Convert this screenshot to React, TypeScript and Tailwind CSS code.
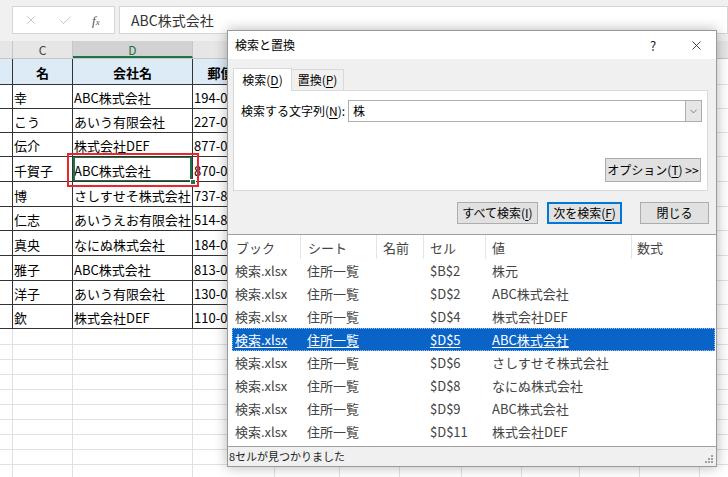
import React from 'react'
import { X, Check, ChevronDown } from 'lucide-react'

const colW = ['w-[13px]', 'w-[60px]', 'w-[120px]', 'w-[82px]', 'w-[65px]', 'w-[60px]', 'w-[62px]', 'w-[60px]', 'w-[58px]', 'w-[60px]', 'w-[60px]', 'w-[60px]']
const letters = ['B', 'C', 'D', 'E', 'F', 'G', 'H', 'I', 'J', 'K', 'L', 'M']
const rowH = ['h-[24px]', 'h-[24px]', 'h-[24px]', 'h-[25px]', 'h-[25px]', 'h-[24px]', 'h-[25px]', 'h-[25px]', 'h-[24px]', 'h-[24px]']

const people = [
  ['幸', 'ABC株式会社', '194-0013'],
  ['こう', 'あいう有限会社', '227-0033'],
  ['伝介', '株式会社DEF', '877-0000'],
  ['千賀子', 'ABC株式会社', '870-0000'],
  ['博', 'さしすせそ株式会社', '737-8000'],
  ['仁志', 'あいうえお有限会社', '514-8000'],
  ['真央', 'なにぬ株式会社', '184-0000'],
  ['雅子', 'ABC株式会社', '813-0000'],
  ['洋子', 'あいう有限会社', '130-0000'],
  ['欽', '株式会社DEF', '110-0000'],
]

const results = [
  ['$B$2', '株元'],
  ['$D$2', 'ABC株式会社'],
  ['$D$4', '株式会社DEF'],
  ['$D$5', 'ABC株式会社'],
  ['$D$6', 'さしすせそ株式会社'],
  ['$D$8', 'なにぬ株式会社'],
  ['$D$9', 'ABC株式会社'],
  ['$D$11', '株式会社DEF'],
]

function U({ children }: { children: React.ReactNode }) {
  return <span className="underline underline-offset-2">{children}</span>
}

function Sheet() {
  return (
    <div className="flex flex-col">
      {/* formula bar */}
      <div className="h-[41px] bg-[#f0f0f0] flex items-start pt-[6px]">
        <div className="ml-[12px] w-[103px] h-[28px] bg-white border border-[#d6d6d6] flex items-center text-[#b8b8b8]">
          <X size={14} strokeWidth={1.3} className="ml-[11px]" />
          <Check size={15} strokeWidth={1.3} className="ml-[20px]" />
          <span className="ml-[19px] italic text-[13px] leading-none text-[#555] font-['Liberation_Serif',serif]">
            f<span className="text-[9px]">x</span>
          </span>
        </div>
        <div className="ml-[4px] flex-1 h-[28px] bg-white border border-[#d6d6d6] flex items-center pl-[11px] text-[14px] leading-none text-[#333]">
          ABC株式会社
        </div>
      </div>

      {/* column letters */}
      <div className="flex h-[18px] bg-[#e6e6e6] border-b border-[#c6c6c6]">
        {letters.map((l, i) => (
          <div
            key={l}
            className={`${colW[i]} shrink-0 border-r border-[#c6c6c6] text-center text-[12px] leading-[17px] ${
              l === 'D' ? 'bg-[#d2d2d2] text-[#217346] border-b-2 border-b-[#217346]' : 'text-[#444]'
            }`}
          >
            {i === 0 || i === letters.length - 1 ? '' : l}
          </div>
        ))}
      </div>

      {/* header row */}
      <div className="flex h-[26px]">
        {letters.map((l, i) => (
          <div
            key={l}
            className={`${colW[i]} shrink-0 border-b flex items-end justify-center pb-[3px] text-[13px] leading-[16px] font-bold text-black whitespace-nowrap overflow-hidden ${
              i < 4 ? 'bg-[#ddebf7] border-r border-[#333]' : 'border-r border-[#e1e1e1]'
            }`}
          >
            {i === 1 ? '名' : i === 2 ? '会社名' : i === 3 ? '郵便番号' : ''}
          </div>
        ))}
      </div>

      {/* data rows */}
      {people.map((p, r) => (
        <div key={r} className={`flex ${rowH[r]}`}>
          {letters.map((l, i) => (
            <div
              key={l}
              className={`${colW[i]} shrink-0 relative border-b flex items-end pb-[2px] px-[1px] text-[13px] leading-[16px] text-black whitespace-nowrap overflow-hidden ${
                i < 4 ? 'border-r border-[#333]' : 'border-r border-[#e1e1e1]'
              }`}
            >
              {i === 1 ? p[0] : i === 2 ? p[1] : i === 3 ? p[2] : ''}
              {r === 3 && i === 2 && (
                <div className="absolute inset-x-0 top-[-1px] bottom-[-1px] border-2 border-[#217346]" />
              )}
            </div>
          ))}
        </div>
      ))}

      {/* empty rows */}
      {[16, 15, 15, 15, 15, 15, 15, 15, 15, 15].map((h, r) => (
        <div key={r} className={`flex ${h === 16 ? 'h-[16px]' : 'h-[15px]'}`}>
          {letters.map((l, i) => (
            <div key={l} className={`${colW[i]} shrink-0 border-r border-b border-[#e1e1e1]`} />
          ))}
        </div>
      ))}
    </div>
  )
}

function Btn({ className, children }: { className: string; children: React.ReactNode }) {
  return (
    <div className={`h-[22px] flex items-center justify-center bg-[#e1e1e1] text-[12px] leading-none text-black ${className}`}>
      {children}
    </div>
  )
}

function Dialog() {
  return (
    <div className="absolute left-[227px] top-[30px] w-[490px] h-[437px] border border-[#9a9a9a] bg-[#f0f0f0] shadow-[0_0_12px_rgba(0,0,0,0.3)] flex flex-col">
      {/* title bar */}
      <div className="h-[28px] shrink-0 bg-white flex items-center">
        <span className="pl-[7px] text-[12px] leading-none text-black">検索と置換</span>
        <span className="ml-auto w-[30px] text-center text-[13px] leading-none text-[#222]">?</span>
        <span className="ml-[8px] w-[40px] flex justify-center text-[#222]">
          <X size={15} strokeWidth={1.3} />
        </span>
      </div>

      {/* tabs */}
      <div className="flex items-end pt-[9px] pl-[5px] h-[31px] shrink-0">
        <div className="relative z-10 -mb-px w-[59px] h-[23px] bg-white border border-b-0 border-[#d9d9d9] flex items-center justify-center text-[12px] leading-none">
          検索(<U>D</U>)
        </div>
        <div className="w-[52px] h-[21px] bg-[#f0f0f0] border border-l-0 border-b-0 border-[#d9d9d9] flex items-center justify-center text-[12px] leading-none">
          置換(<U>P</U>)
        </div>
      </div>

      {/* tab panel */}
      <div className="ml-[5px] w-[475px] h-[101px] shrink-0 bg-white border border-[#d9d9d9] flex flex-col">
        <div className="flex items-center pt-[9px]">
          <span className="w-[114px] pl-[7px] text-[12px] leading-none">
            検索する文字列(<U>N</U>):
          </span>
          <div className="w-[354px] h-[22px] border border-[#adadad] flex items-center">
            <span className="pl-[4px] text-[12px] leading-none flex-1">株</span>
            <div className="w-[16px] h-[20px] bg-[#e6e6e6] border-l border-[#adadad] flex items-center justify-center text-[#555]">
              <ChevronDown size={11} strokeWidth={1.5} />
            </div>
          </div>
        </div>
        <div className="flex justify-end mt-[36px] pr-[6px]">
          <Btn className="w-[96px] h-[24px] border border-[#adadad]">
            オプション(<U>T</U>)&nbsp;&gt;&gt;
          </Btn>
        </div>
      </div>

      {/* buttons */}
      <div className="flex mt-[11px] pl-[229px] shrink-0">
        <Btn className="w-[81px] border border-[#adadad]">
          すべて検索(<U>I</U>)
        </Btn>
        <Btn className="ml-[9px] w-[75px] border-2 border-[#0078d7]">
          次を検索(<U>F</U>)
        </Btn>
        <Btn className="ml-[18px] w-[69px] border border-[#adadad]">閉じる</Btn>
      </div>

      {/* results */}
      <div className="mt-[10px] h-[212px] shrink-0 bg-white border-t border-[#a0a0a0] flex flex-col">
        <div className="flex h-[24px] text-[13px] leading-none text-[#444] items-center">
          <div className="w-[73px] h-full pl-[8px] flex items-center border-r border-[#e5e5e5]">ブック</div>
          <div className="w-[76px] h-full pl-[7px] flex items-center border-r border-[#e5e5e5]">シート</div>
          <div className="w-[47px] h-full pl-[6px] flex items-center border-r border-[#e5e5e5]">名前</div>
          <div className="w-[62px] h-full pl-[6px] flex items-center border-r border-[#e5e5e5]">セル</div>
          <div className="w-[146px] h-full pl-[6px] flex items-center border-r border-[#e5e5e5]">値</div>
          <div className="flex-1 h-full pl-[5px] flex items-center">数式</div>
        </div>
        {results.map(([cell, val], i) => {
          const sel = i === 3
          return (
            <div
              key={cell}
              className={`ml-[4px] mr-[1px] h-[23px] flex items-center text-[13px] leading-[16px] ${
                sel
                  ? 'bg-[#0a64c8] text-white underline underline-offset-2 outline-1 outline-dotted outline-[#9cc0ea] -outline-offset-1'
                  : 'text-[#444]'
              }`}
            >
              <div className="w-[69px] pl-[3px]">検索.xlsx</div>
              <div className="w-[76px] pl-[6px]">住所一覧</div>
              <div className="w-[47px]" />
              <div className="w-[62px] pl-[6px]">{cell}</div>
              <div className="w-[146px] pl-[6px] whitespace-nowrap">{val}</div>
              <div className="flex-1" />
            </div>
          )
        })}
      </div>

      {/* status bar */}
      <div className="flex-1 border-t border-[#a0a0a0] bg-[#f0f0f0] flex items-center pl-[1px] text-[11px] leading-none text-[#222] relative">
        8セルが見つかりました
        <svg className="absolute right-[2px] bottom-[2px]" width="10" height="10" viewBox="0 0 10 10">
          {[
            [8, 2],
            [8, 5],
            [5, 5],
            [8, 8],
            [5, 8],
            [2, 8],
          ].map(([x, y]) => (
            <rect key={`${x}-${y}`} x={x - 1} y={y - 1} width="2" height="2" fill="#a0a0a0" />
          ))}
        </svg>
      </div>
    </div>
  )
}

export default function App() {
  return (
    <div className="relative w-[728px] h-[477px] overflow-hidden bg-white font-['Noto_Sans_CJK_JP',sans-serif]">
      <Sheet />
      {/* red annotation box */}
      <div className="absolute left-[67px] top-[153px] w-[132px] h-[34px] border-2 border-[#e8262b]" />
      {/* fill handle */}
      <div className="absolute left-[190px] top-[179px] w-[6px] h-[6px] bg-[#217346] border border-white" />
      <Dialog />
    </div>
  )
}
